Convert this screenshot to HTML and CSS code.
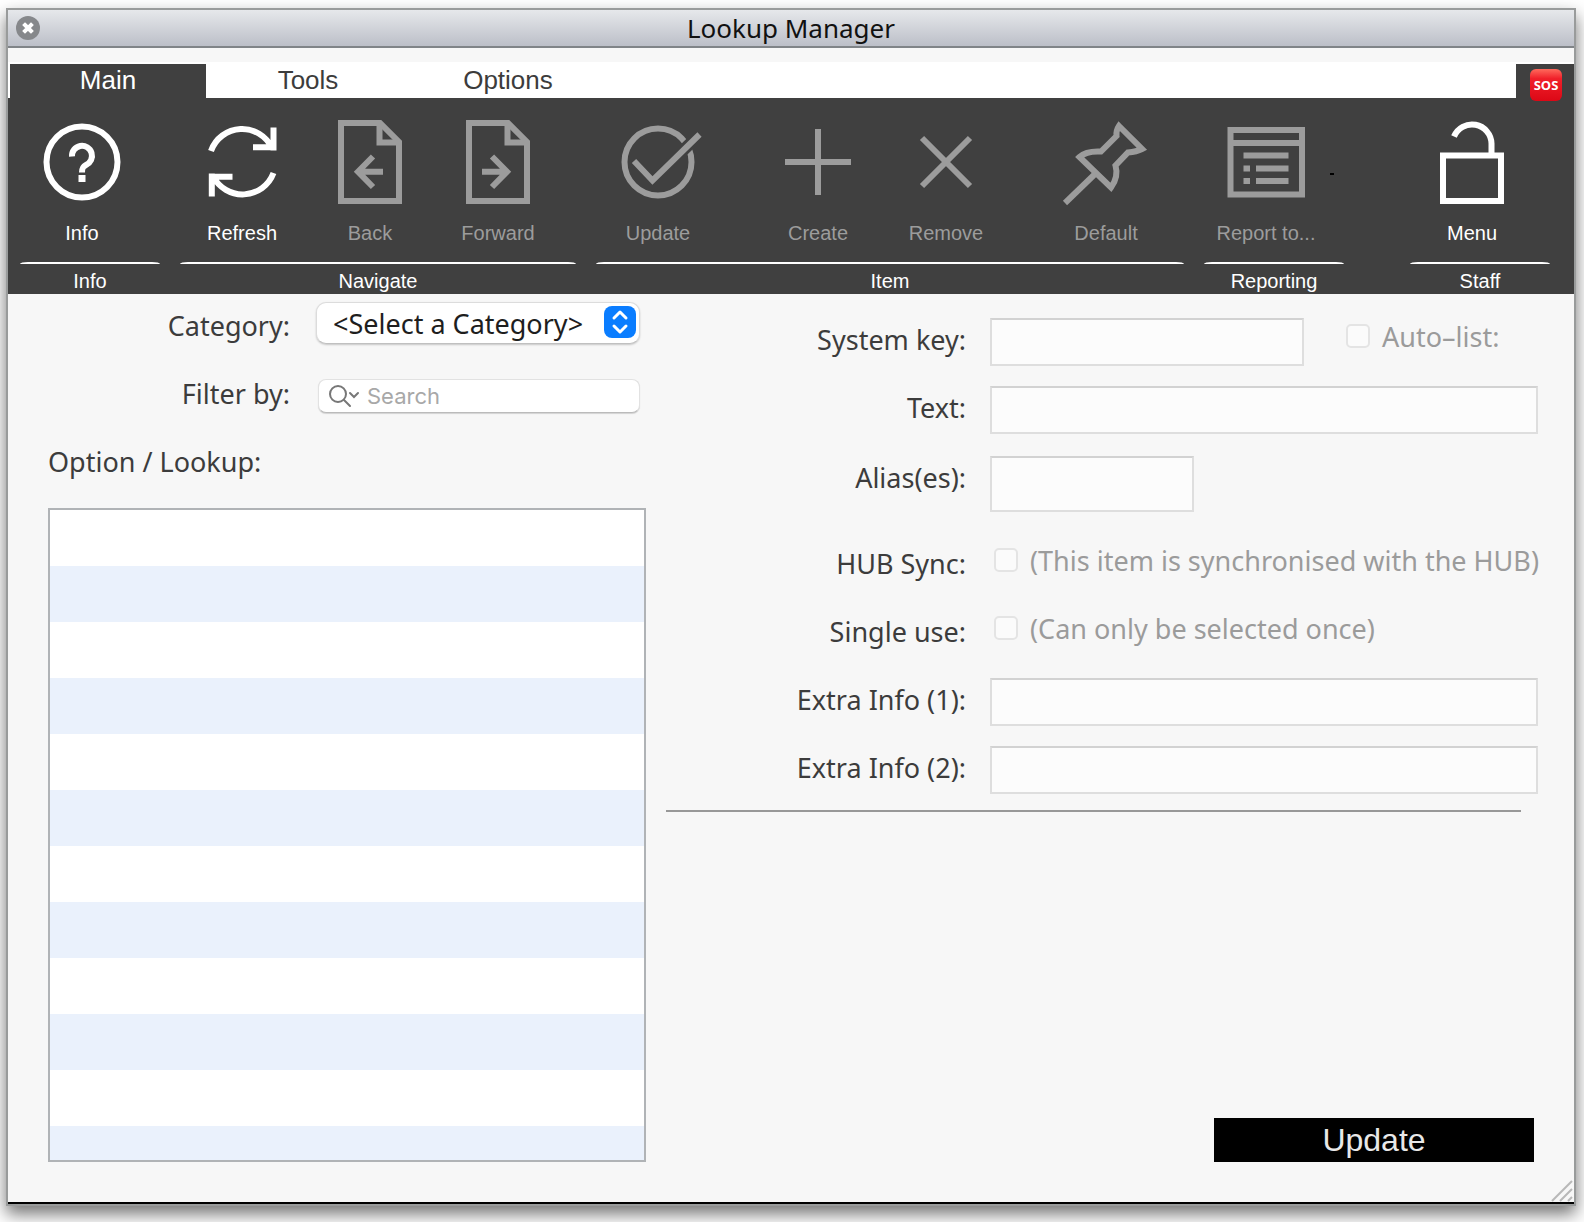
FILE: index.html
```html
<!DOCTYPE html>
<html lang="en">
  <head>
    <meta charset="UTF-8" />
    <title>Lookup Manager</title>
    <meta name="viewport" content="width=device-width, initial-scale=1.0" />
    <link rel="stylesheet" href="styles.css">
  </head>
  <body>
    <div class="window">
      <header class="titlebar">
        <button class="close" aria-label="Close">
          <svg viewBox="0 0 24 24" width="24" height="24">
            <circle cx="12" cy="12" r="12" fill="#86888b" />
            <path d="M9 9l6 6M15 9l-6 6" stroke="#fff" stroke-width="4" stroke-linecap="square" />
          </svg>
        </button>
        <h1>Lookup Manager</h1>
      </header>

      <nav class="tabs">
        <button class="tab active">Main</button>
        <button class="tab">Tools</button>
        <button class="tab">Options</button>
        <button class="sos"><span>SOS</span></button>
      </nav>

      <div class="ribbon">
        <section class="group">
          <div class="tools">
            <button class="tool">
              <svg viewBox="0 0 96 96">
                <circle cx="48" cy="48" r="35.5" />
                <path d="M38 42.5a10 10 0 1 1 14 8.5c-3 1.5-4 3-4 7.5" />
                <path d="M48 61v7" stroke-width="7" />
              </svg>
              Info
            </button>
          </div>
          <h2>Info</h2>
        </section>

        <section class="group">
          <div class="tools">
            <button class="tool">
              <svg viewBox="0 0 96 96">
                <path d="M17 37A33 33 0 0 1 78 34M79.5 13.5v23M59 33.3h23" />
                <path d="M79.5 59A33 33 0 0 1 19 62M17.8 82.500v-23M38.5 62.7h-23" />
              </svg>
              Refresh
            </button>
            <button class="tool" disabled>
              <svg viewBox="0 0 96 96">
                <path d="M19 9H58L77 28V87H19Z" />
                <path d="M57.5 9v19.5H77" />
                <path d="M61 57.7H37M51 42.5L36 57.7 51 73" />
              </svg>
              Back
            </button>
            <button class="tool" disabled>
              <svg viewBox="0 0 96 96">
                <path d="M19 9H58L77 28V87H19Z" />
                <path d="M57.5 9v19.5H77" />
                <path d="M32 57.7H56M42 42.5L57 57.7 42 73" />
              </svg>
              Forward
            </button>
          </div>
          <h2>Navigate</h2>
        </section>

        <section class="group">
          <div class="tools">
            <button class="tool" disabled>
              <svg viewBox="0 0 96 96">
                <circle cx="48" cy="48" r="33.5" />
                <path class="cut" d="M60 49L90 20" />
                <path d="M24 47L42.5 66.5 89.5 20.5" />
              </svg>
              Update
            </button>
            <button class="tool spaced" disabled>
              <svg viewBox="0 0 96 96">
                <path d="M48 15v66M15 48h66" />
              </svg>
              Create
            </button>
            <button class="tool" disabled>
              <svg viewBox="0 0 96 96">
                <path d="M24 24l48 48M72 24L24 72" />
              </svg>
              Remove
            </button>
            <button class="tool spaced" disabled>
              <svg viewBox="0 0 96 96">
                <path d="M61 12L84 35C80 37 75 38 70 38.500L57.500 51.500C60 60 57 68 53 73.500L21.500 43C27 38 35 37 43 37.500L58.500 22C58 18 59 15 61 12Z" />
                <path d="M7 89L37 60" />
              </svg>
              Default
            </button>
          </div>
          <h2>Item</h2>
        </section>

        <section class="group">
          <div class="tools">
            <button class="tool" disabled>
              <svg viewBox="0 0 96 96">
                <path d="M12.5 16H84V80.5H12.5ZM12.5 29H84" />
                <path d="M25.5 41.5H70.5M25.5 54.5H32M38 54.5H70.5M25.5 67H32M38 67H70.5" />
              </svg>
              Report to...
            </button>
            <span class="tick"></span>
          </div>
          <h2>Reporting</h2>
        </section>

        <section class="group staff">
          <div class="tools">
            <button class="tool">
              <svg viewBox="0 0 96 96">
                <path d="M19 41.5H77V87H19Z" />
                <path d="M30 22.5A19.5 19.5 0 0 1 67.5 29.5V40" />
              </svg>
              Menu
            </button>
          </div>
          <h2>Staff</h2>
        </section>
      </div>

      <main class="content">
        <section class="left">
          <div class="filter-row">
            <label for="category">Category:</label>
            <div class="select-wrap">
              <select id="category">
                <option>&lt;Select a Category&gt;</option>
              </select>
              <svg viewBox="0 0 32 32" width="32" height="32">
                <rect width="32" height="32" rx="8" fill="#0a7dff" />
                <path d="M10 12l6-6 6 6M10 20l6 6 6-6" fill="none" stroke="#fff" stroke-width="3" stroke-linecap="round" stroke-linejoin="round" />
              </svg>
            </div>
          </div>
          <div class="filter-row">
            <label for="search">Filter by:</label>
            <div class="search-box">
              <svg viewBox="0 0 32 24" width="32" height="24" fill="none" stroke="#777" stroke-width="2" stroke-linecap="round">
                <circle cx="9" cy="10" r="8" />
                <path d="M15 16l6 6M21 9l4 4 4-4" />
              </svg>
              <input type="text" id="search" placeholder="Search" />
            </div>
          </div>
          <label class="list-label" for="lookups">Option / Lookup:</label>
          <select class="lookups" id="lookups" size="12"></select>
        </section>

        <section class="right">
          <div class="field">
            <label for="key">System key:</label>
            <input class="medium" type="text" id="key" disabled />
            <div class="choice auto">
              <input type="checkbox" id="auto" disabled />
              <label for="auto">Auto–list:</label>
            </div>
          </div>
          <div class="field">
            <label for="text">Text:</label>
            <input type="text" id="text" disabled />
          </div>
          <div class="field alias">
            <label for="alias">Alias(es):</label>
            <input class="small" type="text" id="alias" disabled />
          </div>
          <div class="field">
            <span class="caption">HUB Sync:</span>
            <div class="choice">
              <input type="checkbox" id="hub" disabled />
              <label for="hub">(This item is synchronised with the HUB)</label>
            </div>
          </div>
          <div class="field">
            <span class="caption">Single use:</span>
            <div class="choice">
              <input type="checkbox" id="single" disabled />
              <label for="single">(Can only be selected once)</label>
            </div>
          </div>
          <div class="field">
            <label for="extra1">Extra Info (1):</label>
            <input type="text" id="extra1" disabled />
          </div>
          <div class="field">
            <label for="extra2">Extra Info (2):</label>
            <input type="text" id="extra2" disabled />
          </div>
          <hr />
          <button class="update">Update</button>
        </section>
      </main>

      <svg class="grip" viewBox="0 0 22 22" width="22" height="22">
        <path d="M1 21L21 1M9 21L21 9M17 21L21 17" stroke="#b8b8b8" stroke-width="2" />
      </svg>
    </div>
  </body>
</html>
```

FILE: styles.css
```css
* {
  box-sizing: border-box;
}

body {
  margin: 0;
  padding: 8px 8px 16px 6px;
  min-height: 100vh;
  display: flex;
  background-color: #fff;
  color: #3c3c3c;
  font-family: "Noto Sans", "Open Sans", sans-serif;
  font-size: 27px;
}

button,
input,
select {
  font: inherit;
  margin: 0;
}

h1,
h2 {
  margin: 0;
  font-weight: normal;
}

.window {
  position: relative;
  flex: 1;
  display: flex;
  flex-direction: column;
  background-color: #f7f7f7;
  border: 2px solid #999b9b;
  box-shadow: 0 8px 16px rgba(0, 0, 0, 0.55);
}

/* Title bar */
.titlebar {
  display: grid;
  grid-template-columns: 24px 1fr 24px;
  align-items: center;
  height: 38px;
  padding: 0 8px;
  background: linear-gradient(#e6e8eb, #bcbfc8);
  border-bottom: 2px solid #808488;
}

.titlebar h1 {
  font-size: 26px;
  line-height: 36px;
  text-align: center;
  color: #111;
}

.close {
  display: flex;
  padding: 0;
  border: none;
  background: none;
}

/* Tabs */
.tabs {
  display: flex;
  gap: 4px;
  margin-top: 14px;
  padding: 2px 0 0 2px;
  height: 36px;
  background-color: #fff;
  font-family: "Liberation Sans", Arial, sans-serif;
  font-size: 26px;
}

.tab {
  width: 196px;
  padding: 0 0 2px;
  border: none;
  background: none;
  color: #3c3c3c;
  line-height: 32px;
}

.tab.active {
  background-color: #404040;
  color: #fff;
}

.sos {
  position: relative;
  z-index: 1;
  margin-left: auto;
  width: 58px;
  height: 38px;
  padding: 0 0 0 2px;
  border: none;
  background-color: #404040;
}

.sos span {
  display: block;
  width: 32px;
  height: 32px;
  margin: 3px auto 0;
  border-radius: 6px;
  background: linear-gradient(#ff6a5c, #f0202a 30%, #dc0816);
  color: #fff;
  font: bold 15px/32px "Liberation Sans Narrow", "Open Sans", sans-serif;
  font-size: 13px;
}

/* Ribbon */
.ribbon {
  display: flex;
  gap: 16px;
  height: 196px;
  padding: 0 22px 0 10px;
  background-color: #404040;
  color: #fff;
  font-family: "Liberation Sans", Arial, sans-serif;
  font-size: 20px;
}

.group h2 {
  font-size: 20px;
  line-height: 34px;
  text-align: center;
}

.group h2::before {
  content: "";
  display: block;
  height: 2px;
  margin: 0 2px;
  border-radius: 8px 8px 0 0 / 2px 2px 0 0;
  background-color: #fff;
}

.staff {
  margin-left: auto;
}

.tools {
  display: flex;
  height: 164px;
  padding-right: 16px;
}

.tool {
  display: flex;
  flex-direction: column;
  align-items: center;
  gap: 8px;
  width: 128px;
  padding: 16px 0 0;
  border: none;
  background: none;
  color: #fff;
  line-height: 30px;
}

.tool:disabled {
  color: #9c9c9c;
}

.tool.spaced {
  margin-left: 32px;
}

.tool svg {
  width: 96px;
  height: 96px;
  fill: none;
  stroke: currentColor;
  stroke-width: 6;
}

.tool .cut {
  stroke: #404040;
  stroke-width: 12;
}

.tick {
  width: 4px;
  height: 2px;
  margin: 75px -4px 0 0;
  background-color: #000;
}

/* Content */
.content {
  flex: 1;
  display: grid;
  grid-template-columns: 598fr 872fr;
  gap: 20px;
  padding: 8px 36px 40px 40px;
  border-bottom: 2px solid #000;
}

.left,
.right {
  display: flex;
  flex-direction: column;
  min-width: 0;
}

.left {
  gap: 20px;
}

.filter-row {
  display: grid;
  grid-template-columns: 242px minmax(0, 1fr);
  gap: 26px;
  height: 48px;
  padding-right: 6px;
}

.filter-row label {
  text-align: right;
  line-height: 48px;
}

.select-wrap {
  position: relative;
}

.select-wrap select {
  display: block;
  width: 100%;
  height: 42px;
  padding: 0 44px 0 16px;
  appearance: none;
  border: 1px solid #dcdcdc;
  border-bottom-color: #c0c0c0;
  border-radius: 10px;
  background-color: #fff;
  box-shadow: 0 1px 2px rgba(0, 0, 0, 0.2);
  color: #1e1e1e;
}

.select-wrap svg {
  position: absolute;
  top: 4px;
  right: 4px;
  pointer-events: none;
}

.search-box {
  display: flex;
  align-items: center;
  gap: 6px;
  height: 34px;
  margin: 9px 0 0 2px;
  padding: 0 10px;
  border: 1px solid #e2e2e2;
  border-bottom-color: #bbb;
  border-radius: 8px;
  background-color: #fff;
  box-shadow: 0 1px 1px rgba(0, 0, 0, 0.15);
}

.search-box input {
  flex: 1;
  min-width: 0;
  padding: 0;
  border: none;
  outline: none;
  background: none;
  font-family: Inter, sans-serif;
  font-size: 22px;
}

.search-box input::placeholder {
  color: #a8a8a8;
}

.list-label {
  margin-bottom: 2px;
  line-height: 48px;
}

.lookups {
  flex: 1;
  width: 100%;
  border: 2px solid #b0b3b6;
  border-radius: 0;
  background: repeating-linear-gradient(#fff 0 56px, #eaf1fc 56px 112px);
}

.right {
  gap: 20px;
  padding-top: 16px;
}

.field {
  display: flex;
  gap: 24px;
  height: 48px;
}

.field > label,
.caption {
  flex: 0 0 300px;
  text-align: right;
  line-height: 44px;
}

.field > input {
  flex: 1;
  min-width: 0;
  border: 2px solid #dedede;
  border-top-color: #d2d2d2;
  background-color: #fcfcfc;
}

.field > .medium {
  flex: 0 0 314px;
}

.field > .small {
  flex: 0 0 204px;
}

.alias {
  height: 56px;
  margin: 2px 0 10px;
}

.choice {
  display: flex;
  align-items: center;
  gap: 12px;
  height: 36px;
  padding-left: 4px;
  color: #9b9b9b;
  white-space: nowrap;
}

.choice.auto {
  margin-left: 14px;
}

.choice input {
  width: 24px;
  height: 24px;
  appearance: none;
  border: 2px solid #e4e4e4;
  border-radius: 5px;
  background-color: #fbfbfb;
}

hr {
  width: 98%;
  margin: -4px 0 0;
  border: none;
  border-top: 2px solid #989898;
}

.update {
  width: 320px;
  height: 44px;
  margin: auto 4px 0 auto;
  padding: 0;
  border: none;
  background-color: #000;
  color: #e8e8e8;
  font-family: "Liberation Sans", Arial, sans-serif;
  font-size: 32px;
}

.grip {
  position: absolute;
  right: 1px;
  bottom: 2px;
}
```
